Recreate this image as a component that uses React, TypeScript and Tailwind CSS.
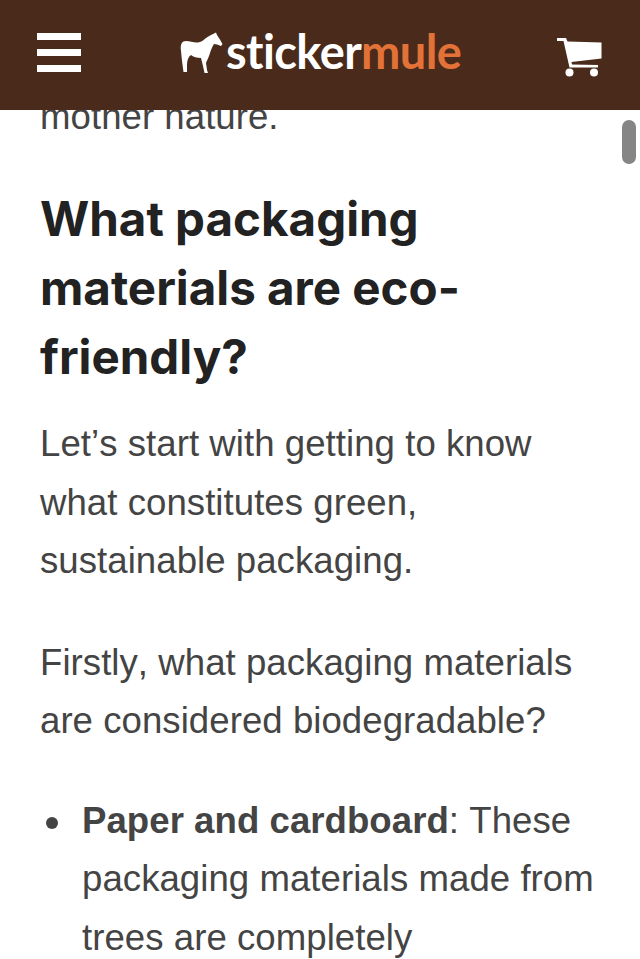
const textCls = "text-[36.6px] leading-[58.5px] tracking-[0.05px] text-[#444444] [font-kerning:none]";

function Mule() {
  return (
    <svg width="43" height="41" viewBox="0 0 43 41" className="mr-[3px] mt-[-6px]">
      <path
        fill="#fff"
        d="M1 19C0 12 2 9 6 9C10 9 14 11 18 10.500C23 10 26 5 31 3L36 0.500L37 3C39 6 41 9 42.500 12L41 14L37 12.500L34 12C32 15 31 18 30 21C29 25 27 28 26 31L27 38L28 41L24.500 41L23 34L21 26C17 26 13 25 11 23C8 25 7 29 7 33L7 40L3.500 40C2.500 33 1.500 25 1 19Z"
      />
    </svg>
  );
}

function Cart() {
  return (
    <svg width="46" height="40" viewBox="0 0 46 40" className="mt-[6px]">
      <path fill="#fff" d="M0 0H9L10.500 3.500L44.500 4.500V20.500L14.500 24L15 26.500L41 27V29.500H12.500L6.500 3H0Z" />
      <circle cx="12.500" cy="34.500" r="4" fill="#fff" />
      <circle cx="37" cy="34.500" r="4" fill="#fff" />
    </svg>
  );
}

export default function App() {
  return (
    <div className="relative h-[959px] w-[640px] overflow-hidden bg-white font-['Liberation_Sans',sans-serif]">
      {/* Header */}
      <header className="relative z-10 flex h-[110px] items-center bg-[#4a2a1b] pr-[37px] pl-[37px]">
        <div className="mt-[-5px] flex w-[44px] flex-col gap-[9px]">
          <span className="h-[7px] bg-white" />
          <span className="h-[7px] bg-white" />
          <span className="h-[7px] bg-white" />
        </div>
        <div className="ml-[99px] flex items-center">
          <Mule />
          <span className="mt-[-8px] font-['Lato',sans-serif] text-[47px] leading-none font-bold tracking-[-0.6px] text-white">
            sticker<span className="text-[#e27237]">mule</span>
          </span>
        </div>
        <div className="ml-auto">
          <Cart />
        </div>
      </header>

      {/* Article */}
      <main className="h-[849px] overflow-hidden pr-[40px] pl-[40px]">
        <p className={`-mt-[22px] ${textCls}`}>mother nature.</p>
        <h2 className="mt-[37.500px] font-['Inter',sans-serif] text-[47.5px] leading-[69px] font-bold text-[#222222]">
          What packaging materials are eco-friendly?
        </h2>
        <p className={`mt-[24px] ${textCls}`}>
          Let’s start with getting to know what constitutes green, sustainable packaging.
        </p>
        <p className={`mt-[43px] ${textCls}`}>
          Firstly, what packaging materials are considered biodegradable?
        </p>
        <ul className={`mt-[41px] -mr-[10px] ${textCls}`}>
          <li className="grid grid-cols-[42px_1fr]">
            <span className="mt-[25px] ml-[6px] size-[12px] rounded-full bg-[#444444]" />
            <span>
              <strong className="font-bold">Paper and cardboard</strong>: These packaging materials made from trees are completely biodegradable
            </span>
          </li>
        </ul>
      </main>

      {/* Scrollbar */}
      <div className="absolute top-[120px] right-[4px] h-[44px] w-[14px] rounded-full bg-[#858585]" />
    </div>
  );
}
